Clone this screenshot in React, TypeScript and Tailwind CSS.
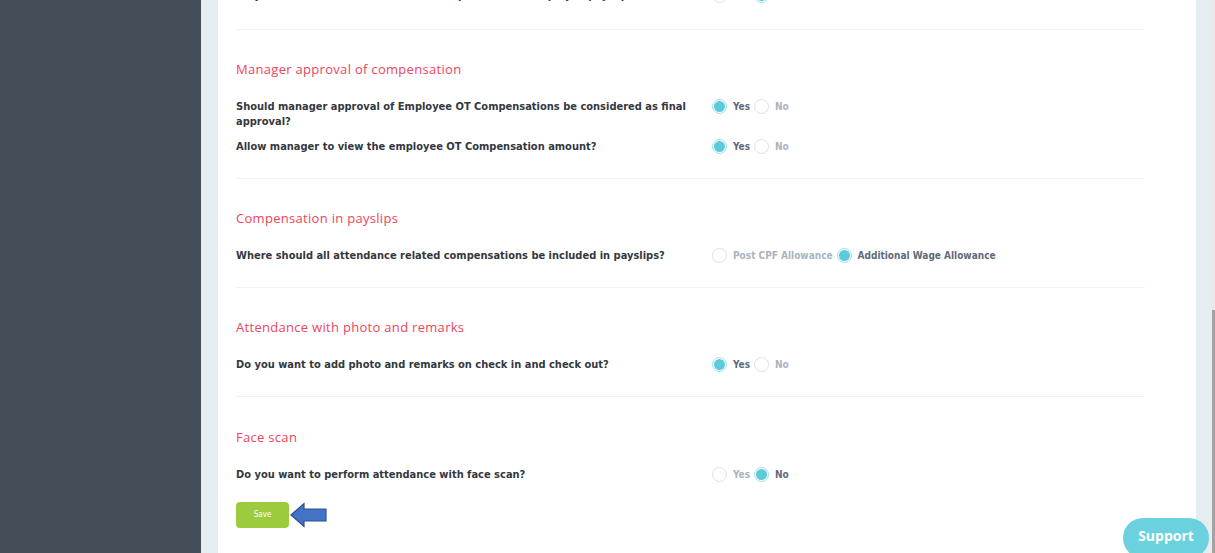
import type { ReactNode } from 'react'

type Choice = { label: string; checked?: boolean }

const SECTIONS: { title: string; rows: { question: ReactNode; choices: Choice[] }[] }[] = [
  {
    title: 'Manager approval of compensation',
    rows: [
      {
        question: 'Should manager approval of Employee OT Compensations be considered as final approval?',
        choices: [{ label: 'Yes', checked: true }, { label: 'No' }],
      },
      {
        question: 'Allow manager to view the employee OT Compensation amount?',
        choices: [{ label: 'Yes', checked: true }, { label: 'No' }],
      },
    ],
  },
  {
    title: 'Compensation in payslips',
    rows: [
      {
        question: 'Where should all attendance related compensations be included in payslips?',
        choices: [{ label: 'Post CPF Allowance' }, { label: 'Additional Wage Allowance', checked: true }],
      },
    ],
  },
  {
    title: 'Attendance with photo and remarks',
    rows: [
      {
        question: 'Do you want to add photo and remarks on check in and check out?',
        choices: [{ label: 'Yes', checked: true }, { label: 'No' }],
      },
    ],
  },
  {
    title: 'Face scan',
    rows: [
      {
        question: 'Do you want to perform attendance with face scan?',
        choices: [{ label: 'Yes' }, { label: 'No', checked: true }],
      },
    ],
  },
]

function Radio({ label, checked }: Choice) {
  return (
    <label className="flex items-center gap-[6px]">
      {checked ? (
        <span className="flex size-[15px] items-center justify-center rounded-full border border-[#9fe0ea] bg-white">
          <span className="size-[11px] rounded-full bg-[#5ccbdc]" />
        </span>
      ) : (
        <span className="size-[15px] rounded-full border border-[#d9e2e8] bg-white" />
      )}
      <span className={checked ? 'text-[#5f6b7a]' : 'text-[#a9b4c0]'}>{label}</span>
    </label>
  )
}

function Row({ question, choices }: { question: ReactNode; choices: Choice[] }) {
  return (
    <div className="flex items-start">
      <p className="w-[476px] pr-[20px] text-[11px] leading-[15px] font-bold text-[#33383f]">{question}</p>
      <div className="flex items-center gap-[4px] text-[10px] font-bold">
        {choices.map((c) => (
          <Radio key={c.label} {...c} />
        ))}
      </div>
    </div>
  )
}

function SaveArrow() {
  return (
    <svg width="38" height="26" viewBox="0 0 38 26" className="ml-[1px]">
      <polygon
        points="1,13 14,1.5 14,7 36,7 36,19 14,19 14,24.5"
        fill="#4472c4"
        stroke="#2f528f"
        strokeWidth="1.2"
      />
    </svg>
  )
}

export default function App() {
  return (
    <div
      className="flex h-[553px] w-[1215px] overflow-hidden bg-[#e6edf1]"
      style={{ fontFamily: '"DejaVu Sans Condensed", "DejaVu Sans", Verdana, sans-serif' }}
    >
      <aside className="w-[201px] shrink-0 bg-[#434d58]" />
      <main className="relative ml-[17px] flex h-full w-[978px] flex-col bg-white px-[18px]">
        {/* section scrolled mostly off the top */}
        <div className="-mt-[12px] mr-[33px] border-b border-[#eef3f5] pb-[26px]">
          <Row
            question="Do you want to include attendance compensation in employee payslips?"
            choices={[{ label: 'Yes' }, { label: 'No', checked: true }]}
          />
        </div>
        {SECTIONS.map((s, i) => (
          <section
            key={s.title}
            className={
              i < SECTIONS.length - 1 ? 'mr-[33px] border-b border-[#eef3f5] pt-[31px] pb-[24px]' : 'mr-[33px] pt-[32px]'
            }
          >
            <h2
              className="mb-[22px] text-[13px] leading-[16px] tracking-[0.3px] text-[#f0435c]"
              style={{ fontFamily: '"Open Sans", sans-serif' }}
            >
              {s.title}
            </h2>
            <div className="flex flex-col gap-[10px]">
              {s.rows.map((r, j) => (
                <Row key={j} {...r} />
              ))}
            </div>
          </section>
        ))}
        <div className="mt-[20px] flex items-center">
          <button className="h-[26px] w-[53px] rounded-[4px] bg-[#9dcb3e] text-[8px] text-white">Save</button>
          <SaveArrow />
        </div>
      </main>
      <div className="ml-[16px] h-full w-[3px] bg-[#e9e9e9]">
        <div className="mt-[310px] h-[243px] w-full bg-[#a3a3a3]" />
      </div>
      <button
        className="absolute top-[518px] left-[1123px] h-[40px] w-[86px] rounded-full bg-[#6bd1de] pb-[5px] text-[14px] font-bold text-white"
        style={{ fontFamily: '"Open Sans", sans-serif' }}
      >
        Support
      </button>
    </div>
  )
}
